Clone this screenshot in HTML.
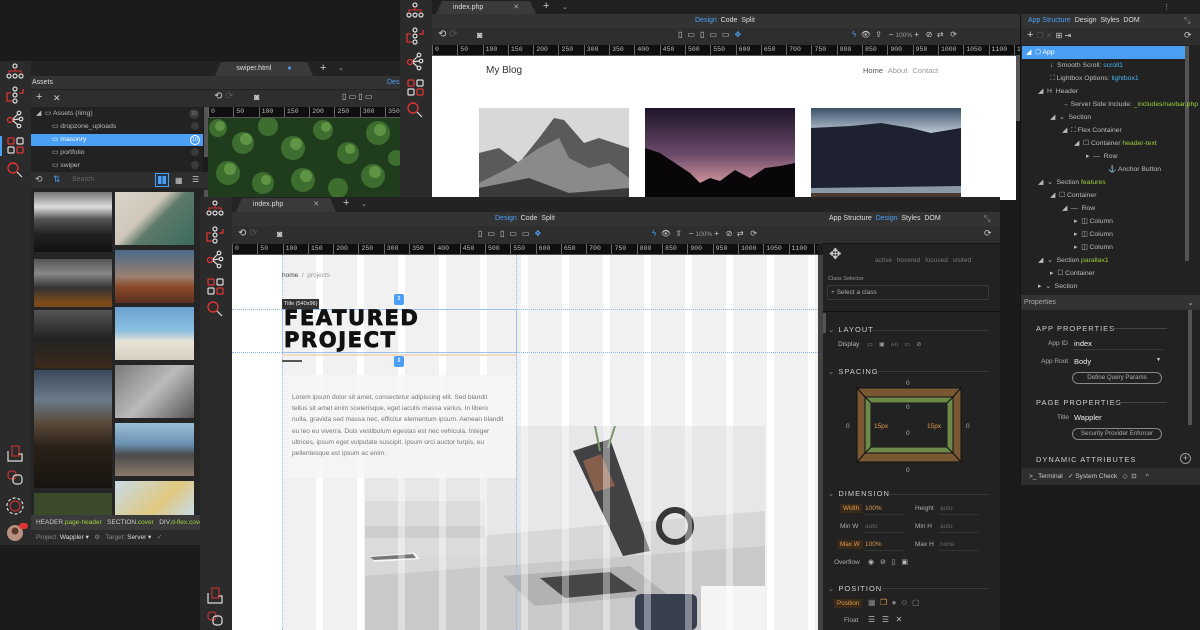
<!DOCTYPE html>
<html><head><meta charset="utf-8">
<style>
*{box-sizing:border-box;margin:0;padding:0}
body{width:1200px;height:630px;background:#1b1b1b;position:relative;overflow:hidden;font-family:"Liberation Sans",sans-serif;color:#ccc;font-size:7px}
.a{position:absolute}
.sb{background:#2b2b2b}
.bar{background:#333}
.tb{background:#2e2e2e}
.ruler{background:#0f0f0f;color:#bbb;font-family:"Liberation Mono",monospace;font-size:6.5px;display:flex;overflow:hidden;white-space:nowrap;border-bottom:1px solid #555}
.ruler span{flex:0 0 25.3px;border-left:1px solid #666;padding-left:2px;line-height:10px}
.tab{background:#3a3a3a;color:#ddd;font-size:7px;text-align:center;line-height:14px;clip-path:polygon(6% 0,94% 0,100% 100%,0 100%)}
.dv{color:#ddd;font-size:7px}
.dv b{color:#4a9ff5;font-weight:normal}
.tree div{height:13px;line-height:13px;white-space:nowrap;color:#bbb;font-size:6.8px}
.g{color:#9fd03a}.bl{color:#4ab8f0}
.sec{color:#ccc;font-size:7.5px;letter-spacing:1px}
.lbl{color:#aaa;font-size:6.5px}
.val{color:#e09a50;font-size:6.5px}
.btnr{border:1px solid #888;border-radius:7px;color:#aaa;font-size:6.2px;text-align:center;line-height:10px}
.ic{stroke:#ddd;fill:none;stroke-width:1.2}
</style></head><body>

<!-- ============ WINDOW A (left) ============ -->
<div class="a sb" style="left:0;top:61px;width:31px;height:484px"></div>
<div class="a" style="left:31px;top:61px;width:370px;height:15px;background:#232323"></div>
<div class="a tab" style="left:215px;top:62px;width:98px;height:14px">swiper.html <span style="color:#4a9ff5;margin-left:14px">●</span></div>
<div class="a" style="left:320px;top:62px;color:#ccc;font-size:11px">+</div>
<div class="a" style="left:338px;top:64px;color:#aaa;font-size:7px">⌄</div>
<div class="a bar" style="left:31px;top:76px;width:370px;height:14px;border-bottom:1px solid #222"></div>
<div class="a" style="left:32px;top:79px;color:#ddd;font-size:7px">Assets</div>
<div class="a" style="left:387px;top:79px;color:#4a9ff5;font-size:7px">Desi</div>
<div class="a tb" style="left:31px;top:90px;width:177px;height:17px"></div>
<div class="a" style="left:36px;top:91px;color:#ccc;font-size:11px">+</div>
<div class="a" style="left:53px;top:93px;color:#ccc;font-size:9px">✕</div>
<div class="a" style="left:31px;top:107px;width:172px;height:65px;background:#222"></div>
<div class="a" style="left:31px;top:134px;width:172px;height:12px;background:#4a9ff5"></div>
<div class="a tree" style="left:36px;top:107px;font-size:6.8px">
<div>◢ &nbsp;▭ Assets (/img)</div>
<div style="padding-left:16px">▭ dropzone_uploads</div>
<div style="padding-left:16px;color:#fff">▭ masonry</div>
<div style="padding-left:16px">▭ portfolio</div>
<div style="padding-left:16px">▭ swiper</div>
</div>
<div class="a" style="left:189px;top:109px;width:10px;height:10px;border-radius:5px;background:#3a3a3a;color:#888;font-size:5px;text-align:center;line-height:10px">30</div>
<div class="a" style="left:191px;top:122px;width:8px;height:8px;border-radius:4px;background:#3a3a3a"></div>
<div class="a" style="left:190px;top:135px;width:10px;height:10px;border-radius:5px;border:1px solid #fff;color:#fff;font-size:5px;text-align:center;line-height:8px">10</div>
<div class="a" style="left:191px;top:148px;width:8px;height:8px;border-radius:4px;background:#3a3a3a"></div>
<div class="a" style="left:191px;top:161px;width:8px;height:8px;border-radius:4px;background:#3a3a3a"></div>
<div class="a" style="left:204px;top:107px;width:4px;height:50px;background:#555"></div>
<div class="a tb" style="left:31px;top:172px;width:177px;height:16px"></div>
<div class="a" style="left:35px;top:174px;color:#bbb;font-size:9px">⟲</div>
<div class="a" style="left:53px;top:174px;color:#4a9ff5;font-size:9px">⇅</div>
<div class="a" style="left:72px;top:176px;color:#666;font-size:7px">Search</div>
<div class="a" style="left:155px;top:173px;width:14px;height:14px;border:1px solid #4a9ff5;background:#1f3550"></div>
<div class="a" style="left:158px;top:176px;width:8px;height:8px;background:repeating-linear-gradient(90deg,#4a9ff5 0 3.5px,transparent 3.5px 4.5px)"></div>
<div class="a" style="left:175px;top:176px;color:#ccc;font-size:8px">▦</div>
<div class="a" style="left:192px;top:175px;color:#ccc;font-size:8px">☰</div>
<div class="a" style="left:31px;top:188px;width:177px;height:327px;background:#252525"></div>
<!-- image grid -->
<div class="a" style="left:34px;top:192px;width:78px;height:60px;background:linear-gradient(180deg,#777 0,#ddd 25%,#555 45%,#222 70%,#111)"></div>
<div class="a" style="left:115px;top:192px;width:79px;height:53px;background:linear-gradient(135deg,#d9d4c8 0,#cfc8ba 40%,#5d7a6b 55%,#3a6a5a 100%)"></div>
<div class="a" style="left:34px;top:259px;width:78px;height:48px;background:linear-gradient(180deg,#555 0,#888 30%,#333 60%,#7a4a1a 90%)"></div>
<div class="a" style="left:115px;top:250px;width:79px;height:53px;background:linear-gradient(180deg,#4a6a8a 0,#9a8070 50%,#8a4a2a 70%,#5a3020)"></div>
<div class="a" style="left:34px;top:310px;width:78px;height:58px;background:linear-gradient(180deg,#555 0,#222 50%,#3a2a1a)"></div>
<div class="a" style="left:115px;top:307px;width:79px;height:53px;background:linear-gradient(180deg,#6aa0d0 0,#8ac0e0 45%,#e8e4d8 65%,#d8d0c0)"></div>
<div class="a" style="left:34px;top:370px;width:78px;height:118px;background:linear-gradient(180deg,#3a4a5a 0,#6a7a8a 25%,#5a4a3a 45%,#2a2018 65%,#181410)"></div>
<div class="a" style="left:115px;top:365px;width:79px;height:53px;background:linear-gradient(135deg,#7a7a7a,#bbb 50%,#555)"></div>
<div class="a" style="left:115px;top:423px;width:79px;height:53px;background:linear-gradient(180deg,#9ac0d8 0,#6a90b0 40%,#4a4a4a 60%,#8a7a6a)"></div>
<div class="a" style="left:34px;top:493px;width:78px;height:22px;background:#3a4a2a"></div>
<div class="a" style="left:115px;top:481px;width:79px;height:34px;background:linear-gradient(135deg,#c8dce8,#e0c880 60%,#c8dce8)"></div>
<div class="a" style="left:204px;top:190px;width:4px;height:40px;background:#555"></div>
<!-- canvas A -->
<div class="a tb" style="left:208px;top:90px;width:193px;height:17px"></div>
<div class="a" style="left:214px;top:91px;color:#ccc;font-size:10px">⟲ <span style="color:#555">⟳</span></div>
<div class="a" style="left:254px;top:92px;color:#ccc;font-size:9px">◙</div>
<div class="a" style="left:342px;top:92px;color:#ccc;font-size:8px">▯ ▭ ▯ ▭</div>
<div class="a ruler" style="left:208px;top:107px;width:193px;height:11px"><span>0</span><span>50</span><span>100</span><span>150</span><span>200</span><span>250</span><span>300</span><span>350</span></div>
<svg class="a" style="left:208px;top:118px" width="193" height="80"><rect width="193" height="80" fill="#1f3d1c"/>
<g fill="#3d6e30"><circle cx="10" cy="10" r="9"/><circle cx="35" cy="25" r="11"/><circle cx="60" cy="8" r="10"/><circle cx="85" cy="30" r="12"/><circle cx="115" cy="12" r="10"/><circle cx="140" cy="35" r="11"/><circle cx="170" cy="15" r="12"/><circle cx="20" cy="55" r="12"/><circle cx="55" cy="65" r="11"/><circle cx="95" cy="62" r="12"/><circle cx="130" cy="70" r="10"/><circle cx="165" cy="58" r="12"/><circle cx="188" cy="40" r="8"/></g>
<g fill="#5e9444"><circle cx="12" cy="8" r="5"/><circle cx="38" cy="21" r="6"/><circle cx="88" cy="26" r="6"/><circle cx="118" cy="9" r="5"/><circle cx="172" cy="12" r="6"/><circle cx="22" cy="51" r="6"/><circle cx="98" cy="58" r="6"/><circle cx="142" cy="31" r="5"/><circle cx="167" cy="54" r="6"/><circle cx="58" cy="62" r="5"/></g></svg>
<div class="a" style="left:31px;top:515px;width:170px;height:15px;background:#3a3a3a;font-size:6.5px;line-height:15px;white-space:nowrap;color:#ccc;padding-left:5px;overflow:hidden">HEADER<span class="g">.page-header</span> &nbsp; SECTION<span class="g">.cover</span> &nbsp; DIV<span class="g">.d-flex.cover</span></div>
<div class="a" style="left:31px;top:530px;width:170px;height:15px;background:#2b2b2b;font-size:6.5px;line-height:15px;white-space:nowrap;color:#888;padding-left:5px">Project: <span style="color:#ddd">Wappler ▾</span> &nbsp; ⚙ &nbsp; Target: <span style="color:#ddd">Server ▾</span> &nbsp; ✓</div>
<!-- sidebar A icons -->
<svg class="a" style="left:0;top:61px" width="31" height="484">
<g class="ic"><circle cx="15" cy="5" r="2"/><circle cx="9" cy="15" r="2"/><circle cx="15" cy="15" r="2"/><circle cx="21" cy="15" r="2"/></g><path d="M15 7V10M9 13V10H21V13" stroke="#d33" fill="none"/>
<g class="ic"><circle cx="15" cy="28" r="2"/><circle cx="15" cy="34" r="2"/><circle cx="15" cy="40" r="2"/></g><path d="M11 32H7V40H12M19 32H23V28" stroke="#d33" fill="none" stroke-width="1.3"/>
<g class="ic"><circle cx="19" cy="52" r="1.8"/><circle cx="21" cy="58" r="1.8"/><circle cx="19" cy="65" r="1.8"/><path d="M12 59L18 53M12 59L19 58M12 59L18 64"/></g><circle cx="10" cy="59" r="2.5" stroke="#d33" fill="none" stroke-width="1.3"/>
<rect x="8" y="77" width="6" height="6" rx="1" stroke="#d33" fill="none" stroke-width="1.3"/><rect x="17" y="77" width="6" height="6" rx="1" class="ic"/><rect x="8" y="86" width="6" height="6" rx="1" class="ic"/><rect x="17" y="86" width="6" height="6" rx="1" stroke="#d33" fill="none" stroke-width="1.3"/>
<rect x="0" y="75" width="2" height="20" fill="#4a9ff5"/>
<circle cx="13" cy="107" r="5" stroke="#d33" fill="none" stroke-width="1.4"/><path d="M17 111L22 116" class="ic" stroke-width="1.6"/>
<path d="M8 390V400H22V393H18" class="ic"/><rect x="12" y="385" width="7" height="10" stroke="#d33" fill="none"/>
<rect x="8" y="410" width="8" height="8" rx="3" stroke="#d33" fill="none"/><rect x="13" y="414" width="9" height="9" rx="3" class="ic"/>
<circle cx="15" cy="445" r="5" stroke="#d33" fill="none"/><circle cx="15" cy="445" r="8" class="ic" stroke-dasharray="3 2"/>
<circle cx="15" cy="472" r="8" fill="#b89080"/><circle cx="15" cy="470" r="3.5" fill="#5a3a2a"/><rect x="19" y="462" width="9" height="6" rx="3" fill="#d33"/>
</svg>

<!-- ============ WINDOW B (top right) ============ -->
<div class="a sb" style="left:400px;top:0;width:32px;height:200px"></div>
<div class="a" style="left:432px;top:0;width:768px;height:14px;background:#202020"></div>
<div class="a tab" style="left:436px;top:1px;width:100px;height:13px;line-height:13px">index.php <span style="margin-left:28px;color:#aaa">✕</span></div>
<div class="a" style="left:543px;top:0px;color:#ccc;font-size:11px">+</div>
<div class="a" style="left:562px;top:3px;color:#aaa;font-size:7px">⌄</div>
<div class="a" style="left:1163px;top:3px;color:#aaa;font-size:7px">⋮</div>
<div class="a bar" style="left:432px;top:14px;width:588px;height:14px"></div>
<div class="a dv" style="left:695px;top:17px"><b>Design</b> &nbsp;Code &nbsp;Split</div>
<div class="a tb" style="left:432px;top:28px;width:588px;height:17px"></div>
<div class="a" style="left:438px;top:29px;color:#ccc;font-size:10px">⟲ <span style="color:#555">⟳</span></div>
<div class="a" style="left:477px;top:30px;color:#ccc;font-size:9px">◙</div>
<div class="a" style="left:678px;top:30px;color:#ccc;font-size:8px;letter-spacing:5px">▯▭▯▭▭<span style="color:#4a9ff5">✥</span></div>
<div class="a" style="left:852px;top:30px;color:#ccc;font-size:8px;white-space:nowrap"><span style="color:#4a9ff5">ϟ</span> &nbsp;👁 &nbsp;⇪ &nbsp; − <span style="font-size:6.5px;color:#999">100%</span> + &nbsp; ⊘ &nbsp;⇄ &nbsp; ⟳</div>
<div class="a ruler" style="left:432px;top:45px;width:588px;height:11px"><span>0</span><span>50</span><span>100</span><span>150</span><span>200</span><span>250</span><span>300</span><span>350</span><span>400</span><span>450</span><span>500</span><span>550</span><span>600</span><span>650</span><span>700</span><span>750</span><span>800</span><span>850</span><span>900</span><span>950</span><span>1000</span><span>1050</span><span>1100</span><span>11</span></div>
<div class="a" style="left:432px;top:56px;width:584px;height:144px;background:#fff"></div>
<div class="a" style="left:1016px;top:56px;width:4px;height:65px;background:#555"></div>
<div class="a" style="left:486px;top:65px;color:#333;font-size:10px">My Blog</div>
<div class="a" style="left:863px;top:66px;color:#555;font-size:7.5px;word-spacing:3px">Home <span style="color:#999">About</span> <span style="color:#999">Contact</span></div>
<svg class="a" style="left:479px;top:108px" width="150" height="92"><rect width="150" height="92" fill="#d8d8d8"/><path d="M0 45L20 40L40 55L60 30L75 10L85 12L105 35L120 30L150 40V92H0Z" fill="#5a5a5a"/><path d="M30 60L60 40L80 30L90 50L110 60L130 55L150 70V92H0V75Z" fill="#8a8a8a"/><path d="M0 80L50 70L90 85L150 80V92H0Z" fill="#3a3a3a"/></svg>
<svg class="a" style="left:645px;top:108px" width="150" height="92"><defs><linearGradient id="s1" x1="0" y1="0" x2="0" y2="1"><stop offset="0" stop-color="#1e1428"/><stop offset="0.5" stop-color="#6a4a6a"/><stop offset="0.85" stop-color="#d89aa0"/></linearGradient></defs><rect width="150" height="92" fill="url(#s1)"/><path d="M0 40L15 45L30 55L45 65L55 75L65 70L75 73L90 62L105 70L120 60L135 58L150 55V92H0Z" fill="#080608"/></svg>
<svg class="a" style="left:811px;top:108px" width="150" height="92"><defs><linearGradient id="s2" x1="0" y1="0" x2="0" y2="1"><stop offset="0" stop-color="#3a5068"/><stop offset="0.3" stop-color="#c8d4e0"/></linearGradient></defs><rect width="150" height="92" fill="url(#s2)"/><path d="M0 20L40 18L70 15L100 20L120 25L150 20V92H0Z" fill="#1e2230"/><path d="M0 80L150 78V85H0Z" fill="#8a98a8"/><rect y="85" width="150" height="7" fill="#4a3a30"/></svg>
<!-- right panel B -->
<div class="a" style="left:1020px;top:14px;width:180px;height:471px;background:#222;border-left:1px solid #111"></div>
<div class="a bar" style="left:1021px;top:14px;width:179px;height:14px"></div>
<div class="a dv" style="left:1028px;top:17px;white-space:nowrap"><b>App Structure</b> &nbsp;Design &nbsp;Styles &nbsp;DOM</div>
<div class="a" style="left:1184px;top:16px;color:#999;font-size:8px">⤡</div>
<div class="a tb" style="left:1021px;top:28px;width:179px;height:17px"></div>
<div class="a" style="left:1027px;top:29px;color:#ccc;font-size:11px;white-space:nowrap">+ <span style="color:#555;font-size:8px">❐ ✕</span> <span style="font-size:8px">⊞ ⇥</span></div>
<div class="a" style="left:1184px;top:30px;color:#ccc;font-size:9px">⟳</div>
<div class="a" style="left:1022px;top:46px;width:163px;height:13px;background:#4a9ff5"></div>
<div class="a" style="left:1185px;top:46px;width:4px;height:215px;background:#555"></div>
<div class="a tree" style="left:1026px;top:46px">
<div style="color:#fff">◢ &nbsp;⬡ App</div>
<div style="padding-left:24px">↓ &nbsp;Smooth Scroll: <span class="bl">scroll1</span></div>
<div style="padding-left:24px">⛶ Lightbox Options: <span class="bl">lightbox1</span></div>
<div style="padding-left:12px">◢ &nbsp;H &nbsp;Header</div>
<div style="padding-left:36px">→ Server Side Include: <span class="g">_includes/navbar.php</span></div>
<div style="padding-left:24px">◢ &nbsp;⌄ &nbsp;Section</div>
<div style="padding-left:36px">◢ &nbsp;⛶ Flex Container</div>
<div style="padding-left:48px">◢ &nbsp;☐ Container <span class="g">header-text</span></div>
<div style="padding-left:60px">▸ &nbsp;— &nbsp;Row</div>
<div style="padding-left:82px">⚓ Anchor Button</div>
<div style="padding-left:12px">◢ &nbsp;⌄ &nbsp;Section <span class="g">features</span></div>
<div style="padding-left:24px">◢ &nbsp;☐ Container</div>
<div style="padding-left:36px">◢ &nbsp;— &nbsp;Row</div>
<div style="padding-left:48px">▸ &nbsp;◫ Column</div>
<div style="padding-left:48px">▸ &nbsp;◫ Column</div>
<div style="padding-left:48px">▸ &nbsp;◫ Column</div>
<div style="padding-left:12px">◢ &nbsp;⌄ &nbsp;Section <span class="g">parallax1</span></div>
<div style="padding-left:24px">▸ &nbsp;☐ Container</div>
<div style="padding-left:12px">▸ &nbsp;⌄ &nbsp;Section</div>
</div>
<div class="a bar" style="left:1021px;top:295px;width:179px;height:15px;color:#aaa;font-size:7px;line-height:15px;padding-left:3px">Properties<span style="float:right;margin-right:6px;font-size:8px">⌄</span></div>
<div class="a" style="left:1036px;top:324px;color:#ccc;font-size:7.5px;letter-spacing:1px">APP PROPERTIES</div>
<div class="a" style="left:1112px;top:328px;width:55px;border-top:1px solid #444"></div>
<div class="a lbl" style="left:1048px;top:340px">App ID</div><div class="a" style="left:1074px;top:339px;color:#eee;font-size:7.5px">index</div>
<div class="a" style="left:1073px;top:349px;width:90px;border-top:1px solid #3a3a3a"></div>
<div class="a lbl" style="left:1041px;top:358px">App Root</div><div class="a" style="left:1074px;top:357px;color:#eee;font-size:7.5px">Body</div><div class="a" style="left:1156px;top:357px;color:#ddd;font-size:5px">▼</div>
<div class="a btnr" style="left:1072px;top:372px;width:90px;height:12px">Define Query Params</div>
<div class="a" style="left:1036px;top:398px;color:#ccc;font-size:7.5px;letter-spacing:1px">PAGE PROPERTIES</div>
<div class="a" style="left:1114px;top:402px;width:53px;border-top:1px solid #444"></div>
<div class="a lbl" style="left:1057px;top:414px">Title</div><div class="a" style="left:1074px;top:413px;color:#eee;font-size:7.5px">Wappler</div>
<div class="a btnr" style="left:1072px;top:428px;width:90px;height:12px">Security Provider Enforcer</div>
<div class="a" style="left:1036px;top:455px;color:#ccc;font-size:7.5px;letter-spacing:1px">DYNAMIC ATTRIBUTES</div>
<div class="a" style="left:1180px;top:453px;width:11px;height:11px;border:1px solid #999;border-radius:6px;color:#bbb;font-size:9px;line-height:9px;text-align:center">+</div>
<div class="a" style="left:1188px;top:310px;width:4px;height:115px;background:#555"></div>
<div class="a" style="left:1021px;top:468px;width:179px;height:17px;background:#2e2e2e;color:#ccc;font-size:6.5px;line-height:17px;white-space:nowrap;padding-left:8px">&gt;_ Terminal &nbsp; ✓ System Check &nbsp; ◇ &nbsp;⊡ &nbsp; &nbsp; ^</div>
<svg class="a" style="left:400px;top:0" width="32" height="200">
<g class="ic"><circle cx="15" cy="5" r="2"/><circle cx="9" cy="15" r="2"/><circle cx="15" cy="15" r="2"/><circle cx="21" cy="15" r="2"/></g><path d="M15 7V10M9 13V10H21V13" stroke="#d33" fill="none"/>
<g class="ic"><circle cx="15" cy="30" r="2"/><circle cx="15" cy="36" r="2"/><circle cx="15" cy="42" r="2"/></g><path d="M11 34H7V42H12M19 34H23V30" stroke="#d33" fill="none" stroke-width="1.3"/>
<g class="ic"><circle cx="19" cy="55" r="1.8"/><circle cx="21" cy="61" r="1.8"/><circle cx="19" cy="68" r="1.8"/><path d="M12 62L18 56M12 62L19 61M12 62L18 67"/></g><circle cx="10" cy="62" r="2.5" stroke="#d33" fill="none" stroke-width="1.3"/>
<rect x="8" y="80" width="6" height="6" rx="1" stroke="#d33" fill="none" stroke-width="1.3"/><rect x="17" y="80" width="6" height="6" rx="1" class="ic"/><rect x="8" y="89" width="6" height="6" rx="1" class="ic"/><rect x="17" y="89" width="6" height="6" rx="1" stroke="#d33" fill="none" stroke-width="1.3"/>
<circle cx="13" cy="108" r="5" stroke="#d33" fill="none" stroke-width="1.4"/><path d="M17 112L22 117" class="ic" stroke-width="1.6"/>
</svg>

<!-- ============ WINDOW C (front) ============ -->
<div class="a sb" style="left:200px;top:197px;width:32px;height:433px"></div>
<div class="a" style="left:232px;top:197px;width:768px;height:15px;background:#232323"></div>
<div class="a tab" style="left:236px;top:198px;width:100px;height:14px">index.php <span style="margin-left:28px;color:#aaa">✕</span></div>
<div class="a" style="left:343px;top:197px;color:#ccc;font-size:11px">+</div>
<div class="a" style="left:361px;top:200px;color:#aaa;font-size:7px">⌄</div>
<div class="a bar" style="left:232px;top:212px;width:591px;height:14px"></div>
<div class="a dv" style="left:495px;top:215px"><b>Design</b> &nbsp;Code &nbsp;Split</div>
<div class="a tb" style="left:232px;top:226px;width:591px;height:18px"></div>
<div class="a" style="left:238px;top:228px;color:#ccc;font-size:10px">⟲ <span style="color:#555">⟳</span></div>
<div class="a" style="left:277px;top:229px;color:#ccc;font-size:9px">◙</div>
<div class="a" style="left:478px;top:229px;color:#ccc;font-size:8px;letter-spacing:5px">▯▭▯▭▭<span style="color:#4a9ff5">✥</span></div>
<div class="a" style="left:652px;top:229px;color:#ccc;font-size:8px;white-space:nowrap"><span style="color:#4a9ff5">ϟ</span> &nbsp;👁 &nbsp;⇪ &nbsp; − <span style="font-size:6.5px;color:#999">100%</span> + &nbsp; ⊘ &nbsp;⇄ &nbsp; ⟳</div>
<div class="a ruler" style="left:232px;top:244px;width:586px;height:11px"><span>0</span><span>50</span><span>100</span><span>150</span><span>200</span><span>250</span><span>300</span><span>350</span><span>400</span><span>450</span><span>500</span><span>550</span><span>600</span><span>650</span><span>700</span><span>750</span><span>800</span><span>850</span><span>900</span><span>950</span><span>1000</span><span>1050</span><span>1100</span><span>11</span></div>
<!-- canvas C -->
<div class="a" style="left:232px;top:255px;width:586px;height:375px;background:#fff;overflow:hidden">
 <div class="a" style="left:50px;top:0;width:536px;height:375px;background:repeating-linear-gradient(90deg,#f1f1f1 0 34px,#fff 34px 41px)"></div>
 <svg class="a" style="left:133px;top:171px" width="400" height="204">
  <rect width="400" height="204" fill="#e6e6e8"/>
  <path d="M0 120L400 85V204H0Z" fill="#d4d4d6"/>
  <path d="M0 150L400 120V204H0Z" fill="#c4c4c6"/>
  <rect x="-10" y="75" width="130" height="55" fill="#d8d8da"/>
  <path d="M-10 100H120V112H-10Z" fill="#c8c8ca"/>
  <path d="M5 130L50 127L55 133L10 136Z" fill="#f7f7f7"/>
  <path d="M5 131L48 128L51 132L9 134Z" fill="#666"/>
  <path d="M208 25L245 13L285 125L258 130Z" fill="#2a2a2c"/>
  <path d="M218 35L236 28L250 60L230 66Z" fill="#9a5a3a" opacity=".7"/>
  <path d="M138 150L265 140L302 168L170 180Z" fill="#aaaaac"/>
  <path d="M175 152L245 146L272 165L200 172Z" fill="#2e2e30"/>
  <circle cx="310" cy="100" r="16" fill="none" stroke="#1e1e20" stroke-width="6"/>
  <rect x="270" y="168" width="62" height="36" rx="6" fill="#1e2638"/>
  <rect x="336" y="160" width="64" height="44" fill="#f4f4f4"/>
  <path d="M230 0L235 25M250 0L243 22" stroke="#6a8a5a" stroke-width="2"/>
 </svg>
 <div class="a" style="left:50px;top:0;width:536px;height:375px;background:repeating-linear-gradient(90deg,rgba(240,240,240,.12) 0 34px,rgba(255,255,255,.45) 34px 41px)"></div>
 <div class="a" style="left:50px;top:120px;width:234px;height:103px;background:rgba(246,246,246,.85)"></div>
</div>
<div class="a" style="left:232px;top:309px;width:586px;border-top:1px dotted #8ab8f0"></div>
<div class="a" style="left:232px;top:352px;width:586px;border-top:1px dotted #8ab8f0"></div>
<div class="a" style="left:282px;top:255px;height:375px;border-left:1px dotted #8ab8f0"></div>
<div class="a" style="left:516px;top:255px;height:375px;border-left:1px dotted #8ab8f0"></div>
<div class="a" style="left:282px;top:272px;color:#444;font-size:6.5px">home &nbsp;<span style="color:#999">/ &nbsp;projects</span></div>
<div class="a" style="left:282px;top:299px;background:#333;color:#eee;font-size:5.5px;padding:1px 2px;line-height:8px">Title (540x96)</div>
<div class="a" style="left:282px;top:309px;width:235px;height:44px;border:1px solid #9cc4f2"></div>
<div class="a" style="left:284px;top:307px;color:#111;font-family:'DejaVu Sans','Liberation Sans',sans-serif;font-weight:900;font-size:21px;line-height:22px;letter-spacing:1.6px;-webkit-text-stroke:.8px #111">FEATURED<br>PROJECT</div>
<div class="a" style="left:394px;top:294px;width:10px;height:11px;background:#4a9ff5;border-radius:2px;color:#fff;font-size:6px;text-align:center;line-height:11px">⇕</div>
<div class="a" style="left:394px;top:356px;width:10px;height:11px;background:#4a9ff5;border-radius:2px;color:#fff;font-size:6px;text-align:center;line-height:11px">⇕</div>
<div class="a" style="left:282px;top:354px;width:234px;height:2px;background:#f5dcc0"></div>
<div class="a" style="left:282px;top:360px;width:20px;height:2px;background:#555"></div>
<div class="a" style="left:292px;top:392px;width:212px;color:#777;font-size:6.6px;line-height:11.2px">Lorem ipsum dolor sit amet, consectetur adipiscing elit. Sed blandit tellus sit amet enim scelerisque, eget iaculis massa varius. In libero nulla, gravida sed massa nec, efficitur elementum ipsum. Aenean blandit eu leo eu viverra. Duis vestibulum egestas est nec vehicula. Integer ultrices, ipsum eget vulputate suscipit, ipsum orci auctor turpis, eu pellentesque est ipsum ac enim.</div>
<div class="a" style="left:818px;top:255px;width:5px;height:375px;background:#444"></div>
<!-- right panel C -->
<div class="a" style="left:823px;top:212px;width:177px;height:418px;background:#222"></div>
<div class="a bar" style="left:823px;top:212px;width:177px;height:14px"></div>
<div class="a dv" style="left:829px;top:215px;white-space:nowrap">App Structure &nbsp;<b>Design</b> &nbsp;Styles &nbsp;DOM</div>
<div class="a" style="left:984px;top:214px;color:#999;font-size:8px">⤡</div>
<div class="a tb" style="left:823px;top:226px;width:177px;height:18px;border-bottom:1px solid #111"></div>
<div class="a" style="left:984px;top:228px;color:#ccc;font-size:9px">⟳</div>
<div class="a" style="left:829px;top:245px;color:#ccc;font-size:15px">✥</div>
<div class="a" style="left:875px;top:257px;color:#777;font-size:6.5px;word-spacing:3px">active hovered focused visited</div>
<div class="a" style="left:828px;top:276px;color:#999;font-size:5.5px">Class Selector</div>
<div class="a" style="left:827px;top:285px;width:162px;height:15px;border:1px solid #3a3a3a;border-radius:2px;color:#aaa;font-size:6.5px;line-height:13px;padding-left:3px">+ Select a class</div>
<div class="a" style="left:823px;top:311px;width:177px;border-top:1px solid #111"></div>
<div class="a" style="left:823px;top:313px;width:3px;height:20px;background:#555"></div>
<div class="a sec" style="left:828px;top:325px"><span style="color:#888">⌄</span> LAYOUT</div>
<div class="a" style="left:873px;top:330px;width:116px;border-top:1px solid #3a3a3a"></div>
<div class="a lbl" style="left:838px;top:341px;color:#bbb">Display</div>
<div class="a" style="left:867px;top:341px;color:#999;font-size:6px;white-space:nowrap;letter-spacing:1px">▭ &nbsp;▣ &nbsp;<span style="font-size:4.5px">All</span> &nbsp;▭ &nbsp;⊘</div>
<div class="a sec" style="left:828px;top:367px"><span style="color:#888">⌄</span> SPACING</div>
<div class="a" style="left:878px;top:371px;width:111px;border-top:1px solid #3a3a3a"></div>
<svg class="a" style="left:855px;top:385px" width="108" height="80"><path d="M2 3H106L98 12H10Z" fill="#7a5834" stroke="#111"/><path d="M2 77H106L98 68H10Z" fill="#7a5834" stroke="#111"/><path d="M2 3L10 12V68L2 77Z" fill="#7a5834" stroke="#111"/><path d="M106 3L98 12V68L106 77Z" fill="#7a5834" stroke="#111"/><path d="M10 12H98L92 18H16Z" fill="#6d8a4a" stroke="#111"/><path d="M10 68H98L92 62H16Z" fill="#6d8a4a" stroke="#111"/><path d="M10 12L16 18V62L10 68Z" fill="#6d8a4a" stroke="#111"/><path d="M98 12L92 18V62L98 68Z" fill="#6d8a4a" stroke="#111"/><rect x="16" y="18" width="76" height="44" fill="#222"/></svg>
<div class="a lbl" style="left:906px;top:380px">0</div>
<div class="a lbl" style="left:906px;top:404px">0</div>
<div class="a lbl" style="left:906px;top:430px">0</div>
<div class="a lbl" style="left:906px;top:467px">0</div>
<div class="a lbl" style="left:846px;top:423px">0</div>
<div class="a lbl" style="left:966px;top:423px">0</div>
<div class="a val" style="left:874px;top:423px">15px</div>
<div class="a val" style="left:927px;top:423px">15px</div>
<div class="a sec" style="left:828px;top:489px"><span style="color:#888">⌄</span> DIMENSION</div>
<div class="a" style="left:890px;top:494px;width:99px;border-top:1px solid #3a3a3a"></div>
<div class="a" style="left:840px;top:504px;background:#3a2a1a;color:#e09a50;font-size:6.3px;padding:1px 3px">Width</div><div class="a val" style="left:865px;top:505px">100%</div>
<div class="a lbl" style="left:915px;top:505px">Height</div><div class="a lbl" style="left:940px;top:505px;color:#666">auto</div>
<div class="a lbl" style="left:840px;top:523px">Min W</div><div class="a lbl" style="left:865px;top:523px;color:#666">auto</div>
<div class="a lbl" style="left:915px;top:523px">Min H</div><div class="a lbl" style="left:940px;top:523px;color:#666">auto</div>
<div class="a" style="left:837px;top:540px;background:#3a2a1a;color:#e09a50;font-size:6.3px;padding:1px 3px">Max W</div><div class="a val" style="left:865px;top:541px">100%</div>
<div class="a lbl" style="left:915px;top:541px">Max H</div><div class="a lbl" style="left:940px;top:541px;color:#666">none</div>
<div class="a" style="left:864px;top:514px;width:40px;border-top:1px solid #333"></div><div class="a" style="left:939px;top:514px;width:40px;border-top:1px solid #333"></div>
<div class="a" style="left:864px;top:532px;width:40px;border-top:1px solid #333"></div><div class="a" style="left:939px;top:532px;width:40px;border-top:1px solid #333"></div>
<div class="a" style="left:864px;top:550px;width:40px;border-top:1px solid #333"></div><div class="a" style="left:939px;top:550px;width:40px;border-top:1px solid #333"></div>
<div class="a lbl" style="left:834px;top:559px">Overflow</div>
<div class="a" style="left:868px;top:558px;color:#bbb;font-size:7px;white-space:nowrap">◉ &nbsp; ⊘ &nbsp; ▯ &nbsp; ▣</div>
<div class="a sec" style="left:828px;top:584px"><span style="color:#888">⌄</span> POSITION</div>
<div class="a" style="left:882px;top:588px;width:107px;border-top:1px solid #3a3a3a"></div>
<div class="a" style="left:834px;top:599px;background:#3a2a1a;color:#e09a50;font-size:6.3px;padding:1px 3px">Position</div>
<div class="a" style="left:868px;top:598px;color:#888;font-size:8px;white-space:nowrap">▦ &nbsp;<span style="color:#e09a50">❐</span> &nbsp;● &nbsp;✩ &nbsp;▢</div>
<div class="a lbl" style="left:844px;top:617px">Float</div>
<div class="a" style="left:868px;top:615px;color:#bbb;font-size:8px;white-space:nowrap">☰ &nbsp; ☰ &nbsp; ✕</div>
<svg class="a" style="left:200px;top:197px" width="32" height="433">
<g class="ic"><circle cx="15" cy="6" r="2"/><circle cx="9" cy="16" r="2"/><circle cx="15" cy="16" r="2"/><circle cx="21" cy="16" r="2"/></g><path d="M15 8V11M9 14V11H21V14" stroke="#d33" fill="none"/>
<g class="ic"><circle cx="15" cy="32" r="2"/><circle cx="15" cy="38" r="2"/><circle cx="15" cy="44" r="2"/></g><path d="M11 36H7V44H12M19 36H23V32" stroke="#d33" fill="none" stroke-width="1.3"/>
<g class="ic"><circle cx="19" cy="56" r="1.8"/><circle cx="21" cy="62" r="1.8"/><circle cx="19" cy="69" r="1.8"/><path d="M12 63L18 57M12 63L19 62M12 63L18 68"/></g><circle cx="10" cy="63" r="2.5" stroke="#d33" fill="none" stroke-width="1.3"/>
<rect x="8" y="82" width="6" height="6" rx="1" stroke="#d33" fill="none" stroke-width="1.3"/><rect x="17" y="82" width="6" height="6" rx="1" class="ic"/><rect x="8" y="91" width="6" height="6" rx="1" class="ic"/><rect x="17" y="91" width="6" height="6" rx="1" stroke="#d33" fill="none" stroke-width="1.3"/>
<circle cx="13" cy="110" r="5" stroke="#d33" fill="none" stroke-width="1.4"/><path d="M17 114L22 119" class="ic" stroke-width="1.6"/>
<path d="M8 396V406H22V399H18" class="ic"/><rect x="12" y="391" width="7" height="10" stroke="#d33" fill="none"/>
<rect x="8" y="415" width="8" height="8" rx="3" stroke="#d33" fill="none"/><rect x="13" y="419" width="9" height="9" rx="3" class="ic"/>
</svg>
</body></html>
